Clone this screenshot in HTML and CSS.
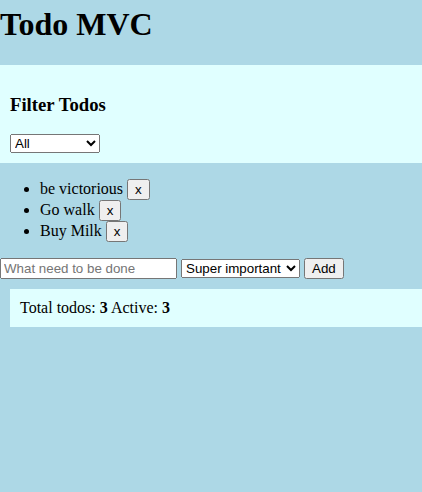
FILE: index.html
```html
<!DOCTYPE html>
<html>
<head>
<meta charset="utf-8">
<link rel="stylesheet" href="styles.css">
</head>
<body>
<h1 class="title">Todo MVC</h1>
<section class="filter">
  <h3 class="filter-title">Filter Todos</h3>
  <select class="filter-select">
    <option>All</option>
    <option>Active</option>
    <option>Completed</option>
  </select>
</section>
<ul class="todo-list">
  <li>be victorious <button class="btn">x</button></li>
  <li>Go walk <button class="btn">x</button></li>
  <li>Buy Milk <button class="btn">x</button></li>
</ul>
<form class="add-form">
  <input class="add-input" type="text" placeholder="What need to be done">
  <select class="prio-select">
    <option>Super important</option>
    <option>Important</option>
    <option>Normal</option>
  </select>
  <button class="btn" type="button">Add</button>
</form>
<div class="stats">Total todos: <b>3</b> Active: <b>3</b></div>
</body>
</html>
```
FILE: styles.css
```css
html, body {
  background: #add8e6;
}
body {
  margin: 0;
  font-family: "Liberation Serif", "Times New Roman", serif;
  font-size: 16px;
  color: #000;
}
.title {
  font-size: 32px;
  margin: 6px 0 22px;
}
.filter {
  background: #e0ffff;
  padding: 10px;
}
.filter-title {
  font-size: 18.72px;
  margin: 18.72px 0;
}
.filter-select {
  width: 90px;
}
select, input, button {
  font-family: "Liberation Sans", Arial, sans-serif;
  font-size: 13.333px;
}
.todo-list {
  margin: 16px 0;
  padding-left: 40px;
}
.add-form {
  margin: 0;
}
.add-input {
  width: 177px;
  box-sizing: border-box;
}
.prio-select {
  width: 119px;
}
.stats {
  background: #e0ffff;
  margin: 10px 0 0 10px;
  padding: 10px;
}
```
